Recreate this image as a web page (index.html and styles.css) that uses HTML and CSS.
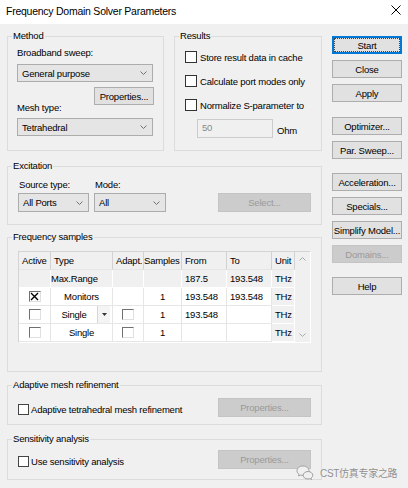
FILE: index.html
```html
<!DOCTYPE html>
<html>
<head>
<meta charset="utf-8">
<link rel="stylesheet" href="styles.css">
</head>
<body>
<div class="window">
  <div class="titlebar">
    <span class="title">Frequency Domain Solver Parameters</span>
    <svg class="close" width="10" height="10" viewBox="0 0 10 10"><path d="M0.5 0.5 L9.5 9.5 M9.5 0.5 L0.5 9.5" stroke="#000" stroke-width="1" fill="none"/></svg>
  </div>
  <div class="main">
    <div class="left">
      <div class="row1">
        <div class="group method">
          <span class="legend">Method</span>
          <div class="lbl">Broadband sweep:</div>
          <div class="combo c-gen"><span>General purpose</span><svg class="chev" width="7" height="4" viewBox="0 0 7 4"><polyline points="0.5,0.5 3.5,3.5 6.5,0.5"/></svg></div>
          <div class="btn b-props">Properties...</div>
          <div class="lbl l-mesh">Mesh type:</div>
          <div class="combo c-mesh"><span>Tetrahedral</span><svg class="chev" width="7" height="4" viewBox="0 0 7 4"><polyline points="0.5,0.5 3.5,3.5 6.5,0.5"/></svg></div>
        </div>
        <div class="group results">
          <span class="legend">Results</span>
          <div class="chk-row"><span class="cb"></span><span>Store result data in cache</span></div>
          <div class="chk-row"><span class="cb"></span><span>Calculate port modes only</span></div>
          <div class="chk-row"><span class="cb"></span><span>Normalize S-parameter to</span></div>
          <div class="ohm-row"><div class="input">50</div><span class="ohm">Ohm</span></div>
        </div>
      </div>
      <div class="group excitation">
        <span class="legend">Excitation</span>
        <div class="ex-col c1">
          <div class="lbl sm">Source type:</div>
          <div class="combo c-src"><span>All Ports</span><svg class="chev" width="7" height="4" viewBox="0 0 7 4"><polyline points="0.5,0.5 3.5,3.5 6.5,0.5"/></svg></div>
        </div>
        <div class="ex-col c2">
          <div class="lbl sm">Mode:</div>
          <div class="combo c-mode"><span>All</span><svg class="chev" width="7" height="4" viewBox="0 0 7 4"><polyline points="0.5,0.5 3.5,3.5 6.5,0.5"/></svg></div>
        </div>
        <div class="btn disabled b-wide b-select">Select...</div>
      </div>
      <div class="group freq">
        <span class="legend">Frequency samples</span>
        <div class="grid">
          <table class="samples">
            <tr class="hdr">
              <th class="w-act">Active</th><th class="w-type">Type</th><th class="w-adapt">Adapt.</th><th class="w-smp">Samples</th><th class="w-from">From</th><th class="w-to">To</th><th class="w-unit unit">Unit</th>
            </tr>
            <tr class="gray">
              <td></td>
              <td class="nopad"><div class="type"><span class="tname">Max.Range</span><span class="dd-space"></span></div></td>
              <td></td><td></td><td>187.5</td><td>193.548</td><td class="unit">THz</td>
            </tr>
            <tr>
              <td class="ctr"><span class="cb3d"><svg width="9" height="9" viewBox="0 0 9 9"><path d="M1 1 L8 8 M8 1 L1 8" stroke="#000" stroke-width="1.4"/></svg></span></td>
              <td class="ctr">Monitors</td>
              <td></td><td class="ctr">1</td><td>193.548</td><td>193.548</td><td class="unit">THz</td>
            </tr>
            <tr>
              <td class="ctr"><span class="cb3d"></span></td>
              <td class="nopad"><div class="type"><span class="tname">Single</span><span class="dd"><svg width="5" height="3" viewBox="0 0 5 3"><polygon points="0,0 5,0 2.5,3" fill="#333"/></svg></span></div></td>
              <td class="ctr"><span class="cb3d"></span></td><td class="ctr">1</td><td>193.548</td><td></td><td class="unit">THz</td>
            </tr>
            <tr class="last">
              <td class="ctr"><span class="cb3d"></span></td>
              <td class="ctr">Single</td>
              <td class="ctr"><span class="cb3d"></span></td><td class="ctr">1</td><td></td><td></td><td class="unit">THz</td>
            </tr>
          </table>
          <div class="vscroll">
            <svg width="7" height="4" viewBox="0 0 7 4"><polyline points="0.5,3.5 3.5,0.5 6.5,3.5" fill="none" stroke="#a8a8a8"/></svg>
            <svg width="7" height="4" viewBox="0 0 7 4"><polyline points="0.5,0.5 3.5,3.5 6.5,0.5" fill="none" stroke="#a8a8a8"/></svg>
          </div>
        </div>
      </div>
      <div class="group adaptive">
        <span class="legend">Adaptive mesh refinement</span>
        <div class="opt-row">
          <div class="chk-row low"><span class="cb"></span><span>Adaptive tetrahedral mesh refinement</span></div>
          <div class="btn disabled b-wide">Properties...</div>
        </div>
      </div>
      <div class="group sensitivity">
        <span class="legend">Sensitivity analysis</span>
        <div class="opt-row">
          <div class="chk-row low"><span class="cb"></span><span>Use sensitivity analysis</span></div>
          <div class="btn disabled b-wide">Properties...</div>
        </div>
      </div>
    </div>
    <div class="right">
      <div class="btn focus">Start</div>
      <div class="btn">Close</div>
      <div class="btn">Apply</div>
      <div class="btn sep9">Optimizer...</div>
      <div class="btn">Par. Sweep...</div>
      <div class="btn sep8">Acceleration...</div>
      <div class="btn">Specials...</div>
      <div class="btn">Simplify Model...</div>
      <div class="btn disabled">Domains...</div>
      <div class="btn sep8">Help</div>
    </div>
  </div>
  <div class="watermark">
    <svg class="wx" width="18" height="15" viewBox="0 0 18 15">
      <path d="M7 1 C3.4 1 1 3.2 1 5.8 C1 7.3 1.8 8.5 3 9.3 L2.5 11 L4.6 10 C5.4 10.3 6.2 10.4 7 10.4 C10.6 10.4 13 8.3 13 5.8 C13 3.2 10.6 1 7 1 Z" fill="#f0f0f0" stroke="#a0a0a0" stroke-width="1"/>
      <path d="M12 6.5 C9.2 6.5 7.2 8.3 7.2 10.3 C7.2 12.3 9.2 14 12 14 C12.6 14 13.2 13.9 13.8 13.7 L15.5 14.5 L15.1 13 C16.2 12.3 16.8 11.4 16.8 10.3 C16.8 8.3 14.8 6.5 12 6.5 Z" fill="#f0f0f0" stroke="#a0a0a0" stroke-width="1"/>
    </svg>
    <span class="wtext">CST仿真专家之路</span>
  </div>
</div>
</body>
</html>
```
FILE: styles.css
```css
body {
  margin: 0;
  font-family: "Liberation Sans", Arial, sans-serif;
  font-size: 9.5px;
  letter-spacing: -0.2px;
  color: #000;
}

.window {
  position: relative;
  width: 408px;
  height: 488px;
  background: #f0f0f0;
  overflow: hidden;
}

.titlebar {
  height: 24px;
  background: #fff;
  display: flex;
  align-items: center;
  justify-content: space-between;
  padding: 0 7px 0 6px;
}

.title {
  font-size: 10.5px;
  letter-spacing: -0.25px;
  padding-bottom: 2px;
}

.close {
  margin-bottom: 4px;
}

.main {
  display: flex;
  gap: 10px;
  padding: 12px 0 0 7px;
}

.left {
  width: 315px;
  display: flex;
  flex-direction: column;
}

.row1 {
  display: flex;
  gap: 10px;
  height: 115px;
}

.group {
  position: relative;
  box-sizing: border-box;
  border: 1px solid #dcdcdc;
}

.legend {
  position: absolute;
  top: -7px;
  left: 4px;
  padding: 0 1px;
  line-height: 12px;
  background: #f0f0f0;
  white-space: nowrap;
}

.lbl {
  line-height: 12px;
  height: 12px;
  white-space: nowrap;
}

.lbl.sm {
  padding-left: 1px;
}

/* Method */
.method {
  width: 157px;
  height: 115px;
  padding: 10px 10px 0 9px;
  display: flex;
  flex-direction: column;
}

.combo {
  box-sizing: border-box;
  display: flex;
  align-items: center;
  justify-content: space-between;
  border: 1px solid #acacac;
  background: #e5e5e5;
  padding: 0 5px 0 4px;
  white-space: nowrap;
}

.chev polyline {
  fill: none;
  stroke: #707070;
  stroke-width: 1;
}

.c-gen {
  margin-top: 5px;
  height: 18px;
}

.b-props {
  margin-top: 5px;
  align-self: flex-end;
  width: 60px;
  height: 20px;
  margin-right: -1px;
  margin-bottom: -3px;
}

.l-mesh {
  position: relative;
}

.c-mesh {
  margin-top: 4px;
  height: 18px;
}

/* Results */
.results {
  width: 148px;
  height: 115px;
  padding: 14px 0 0 10px;
  display: flex;
  flex-direction: column;
  gap: 12px;
}

.chk-row {
  display: flex;
  align-items: center;
  gap: 3px;
  height: 12px;
  white-space: nowrap;
}

.cb {
  box-sizing: border-box;
  width: 12px;
  height: 12px;
  border: 1px solid #333;
  background: #fff;
  flex: none;
}

.ohm-row {
  display: flex;
  align-items: center;
  margin-top: -4px;
}

.input {
  box-sizing: border-box;
  margin-left: 12px;
  width: 76px;
  height: 19px;
  border: 1px solid #cccccc;
  background: #f0f0f0;
  color: #8a8a8a;
  padding: 2px 0 0 4px;
}

.ohm {
  margin-left: 4px;
  margin-top: 4px;
}

/* Buttons */
.btn {
  box-sizing: border-box;
  height: 18px;
  display: flex;
  align-items: center;
  justify-content: center;
  background: #e1e1e1;
  border: 1px solid #adadad;
  white-space: nowrap;
}

.btn.disabled {
  background: #cccccc;
  border-color: #c4c4c4;
  color: #9a9a9a;
}

.btn.focus {
  border-color: #0078d7;
  box-shadow: inset 0 0 0 1px #0078d7;
  outline: 1px dotted #444;
  outline-offset: -3px;
}

.b-wide {
  width: 93px;
  height: 19px;
}

/* Excitation */
.excitation {
  height: 59px;
  margin-top: 15px;
  padding: 12px 10px 0 10px;
  display: flex;
  align-items: flex-start;
}

.ex-col {
  display: flex;
  flex-direction: column;
  gap: 2px;
}

.c1 {
  width: 71px;
}

.c2 {
  width: 72px;
  margin-left: 5px;
}

.c-src, .c-mode {
  height: 19px;
}

.b-select {
  margin-left: auto;
  margin-top: 14px;
}

/* Frequency samples */
.freq {
  height: 135px;
  margin-top: 12px;
  padding: 13px 0 0 10px;
}

.grid {
  display: flex;
  box-sizing: border-box;
  width: 293px;
  border: 1px solid #d4d4d4;
  border-right-color: #ffffff;
  border-bottom-color: #ffffff;
  background: #fff;
}

table.samples {
  border-collapse: separate;
  border-spacing: 0;
  table-layout: fixed;
  width: 276px;
}

.samples th, .samples td {
  box-sizing: border-box;
  height: 18px;
  padding: 0 0 0 3px;
  border-right: 1px solid #e6e6e6;
  border-bottom: 1px solid #e6e6e6;
  white-space: nowrap;
  overflow: hidden;
  font-weight: normal;
  text-align: left;
  vertical-align: middle;
}

.samples .hdr th {
  background: #f0f0f0;
  border-right-color: #d2d2d2;
  border-bottom-color: #e6e6e6;
}

.w-act { width: 32px; }
.w-type { width: 62px; }
.w-adapt { width: 31px; }
.w-smp { width: 38px; padding-left: 0 !important; }
.w-from { width: 45px; }
.w-to { width: 45px; }
.w-unit { width: 23px; }

.samples .gray td {
  background: #f0f0f0;
  border-color: #ffffff;
}

.samples td.unit {
  background: #f0f0f0;
  border-color: #ffffff;
}

.samples td.ctr {
  text-align: center;
  padding: 0;
}

.samples td.nopad {
  padding: 0;
}

.type {
  display: flex;
  align-items: center;
  height: 17px;
}

.tname {
  flex: 1;
  text-align: center;
}

.dd, .dd-space {
  width: 13px;
  height: 17px;
  margin-right: 2px;
  flex: none;
}

.dd {
  box-sizing: border-box;
  display: flex;
  align-items: center;
  justify-content: center;
  background: #f4f4f4;
  border-left: 1px solid #d6d6d6;
}

.cb3d {
  box-sizing: border-box;
  display: inline-flex;
  align-items: center;
  justify-content: center;
  vertical-align: middle;
  width: 12px;
  height: 11px;
  background: #fff;
  border-top: 1px solid #707070;
  border-left: 1px solid #707070;
  border-right: 1px solid #e0e0e0;
  border-bottom: 1px solid #e0e0e0;
}

.vscroll {
  flex: 1;
  background: #f0f0f0;
  display: flex;
  flex-direction: column;
  justify-content: space-between;
  align-items: center;
  padding: 5px 0 5px;
}

/* Options groups */
.adaptive {
  height: 40px;
  margin-top: 13px;
  padding: 12px 10px 0 10px;
}

.sensitivity {
  height: 41px;
  margin-top: 14px;
  padding: 10px 10px 0 10px;
}

.opt-row {
  display: flex;
  align-items: center;
  justify-content: space-between;
}

.chk-row.low {
  margin-top: 4px;
  gap: 2px;
}

.chk-row.low .cb {
  width: 11px;
  height: 11px;
  border-color: #444;
}

/* Right column */
.right {
  width: 70px;
  display: flex;
  flex-direction: column;
  gap: 6px;
}

.sep9 { margin-top: 9px; }
.sep8 { margin-top: 8px; }

/* Watermark */
.watermark {
  position: absolute;
  left: 296px;
  top: 465px;
  display: flex;
  align-items: center;
  gap: 6px;
}

.wtext {
  font-family: "Liberation Sans", "Noto Sans CJK SC", sans-serif;
  font-size: 10px;
  letter-spacing: -0.3px;
  color: #8f8f8f;
  text-shadow: 0 0 1px #fff;
}
```
